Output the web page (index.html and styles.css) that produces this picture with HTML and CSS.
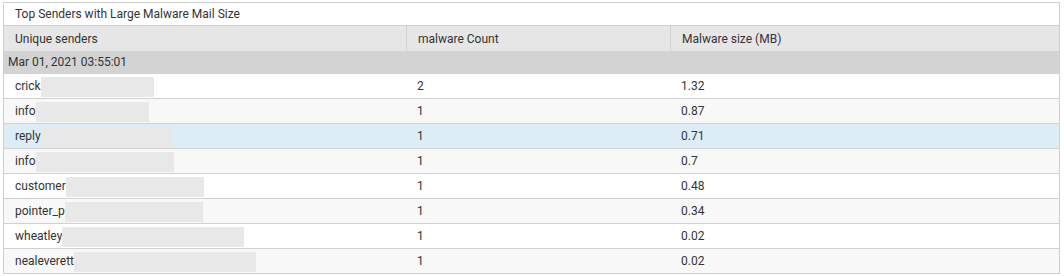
FILE: index.html
```html
<!DOCTYPE html>
<html>
<head>
<meta charset="utf-8">
<link rel="stylesheet" href="styles.css">
</head>
<body>
<div class="panel">
  <div class="panel-title">Top Senders with Large Malware Mail Size</div>
  <div class="grid">
    <div class="row head">
      <div class="cell">Unique senders</div>
      <div class="cell">malware Count</div>
      <div class="cell">Malware size (MB)</div>
    </div>
    <div class="group">Mar 01, 2021 03:55:01</div>
    <div class="row">
      <div class="cell">crick<span class="mask" style="width:113px"></span></div>
      <div class="cell">2</div>
      <div class="cell">1.32</div>
    </div>
    <div class="row alt">
      <div class="cell">info<span class="mask" style="width:113px"></span></div>
      <div class="cell">1</div>
      <div class="cell">0.87</div>
    </div>
    <div class="row selected">
      <div class="cell">reply<span class="mask" style="width:131px"></span></div>
      <div class="cell">1</div>
      <div class="cell">0.71</div>
    </div>
    <div class="row alt">
      <div class="cell">info<span class="mask" style="width:138px"></span></div>
      <div class="cell">1</div>
      <div class="cell">0.7</div>
    </div>
    <div class="row">
      <div class="cell">customer<span class="mask" style="width:138px"></span></div>
      <div class="cell">1</div>
      <div class="cell">0.48</div>
    </div>
    <div class="row alt">
      <div class="cell">pointer_p<span class="mask" style="width:138px"></span></div>
      <div class="cell">1</div>
      <div class="cell">0.34</div>
    </div>
    <div class="row">
      <div class="cell">wheatley<span class="mask" style="width:182px"></span></div>
      <div class="cell">1</div>
      <div class="cell">0.02</div>
    </div>
    <div class="row alt">
      <div class="cell">nealeverett<span class="mask" style="width:182px"></span></div>
      <div class="cell">1</div>
      <div class="cell">0.02</div>
    </div>
  </div>
</div>
</body>
</html>
```

FILE: styles.css
```css
html, body {
  margin: 0;
  padding: 0;
  background: #fff;
}

body {
  font-family: Roboto, "Liberation Sans", Arial, sans-serif;
  font-size: 12px;
  color: #333;
}

.panel {
  margin: 2px 0 0 3px;
  width: 1057px;
  box-sizing: border-box;
  border: 1px solid #cfcfcf;
  border-bottom: none;
}

.panel-title {
  height: 22px;
  line-height: 22px;
  padding-left: 11px;
  background: #fff;
  border-bottom: 1px solid #cfcfcf;
}

.row {
  display: grid;
  grid-template-columns: 402px 264px 1fr;
  height: 25px;
  box-sizing: border-box;
  border-bottom: 1px solid #d0d0d0;
  background: #fff;
}

.row.alt {
  background: #f8f8f8;
}

.row.selected {
  background: #ddedf7;
}

.cell {
  display: flex;
  align-items: center;
  padding-left: 11px;
  white-space: nowrap;
  overflow: hidden;
}

.head {
  background: #e6e6e6;
  height: 25px;
  border-bottom: none;
}

.head .cell + .cell {
  border-left: 1px solid #d2d2d2;
}

.group {
  height: 23px;
  line-height: 23px;
  padding-left: 4px;
  background: #d3d3d3;
}

.mask {
  display: inline-block;
  height: 20px;
  margin-top: 1px;
  background: #e8e8e8;
}
```
